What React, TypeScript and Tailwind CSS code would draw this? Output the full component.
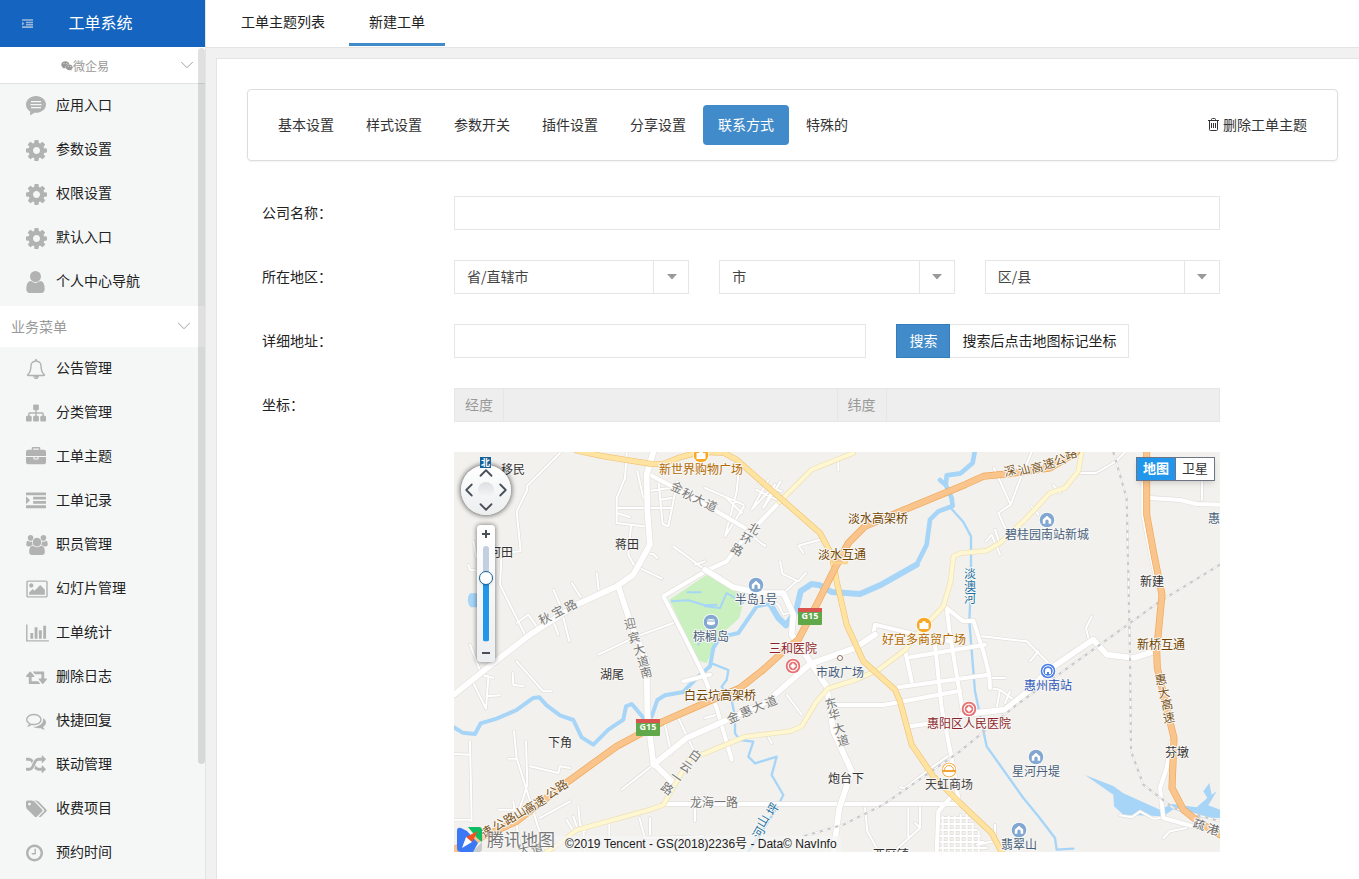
import React, { useState } from 'react';
import clsx from 'clsx';
import { ChevronDown, ChevronLeft, ChevronRight, ChevronUp } from 'lucide-react';
import { FaWeixin } from 'react-icons/fa';

interface Glyph {
  viewBox: string;
  width: number;
  height: number;
  d: string;
}

interface MenuItem {
  label: string;
  icon: Glyph;
}

const comment: Glyph = {
  viewBox: '0 0 20 20',
  width: 20,
  height: 20,
  d: 'M10 0C4.5 0 0 3.8 0 8.5c0 3 1.6 5.4 4.2 7L4 19.5l4.3-2.7c5.8.6 11.7-2.7 11.7-8.3C20 3.8 15.5 0 10 0zM5 5h10v1.3H5zm-.5 3h11v1.3h-11zM5 11h10v1.3H5z',
};
const cog: Glyph = {
  viewBox: '128 128 1536 1536',
  width: 21,
  height: 21,
  d: 'M1152 896q0-106-75-181t-181-75-181 75-75 181 75 181 181 75 181-75 75-181zm512-109v222q0 12-8 23t-20 13l-185 28q-19 54-39 91 35 50 107 138 10 12 10 25t-9 23q-27 37-99 108t-94 71q-12 0-26-9l-138-108q-44 23-91 38-16 136-29 186-7 28-36 28h-222q-14 0-24.5-8.5t-11.5-21.5l-28-184q-49-16-90-37l-141 107q-10 9-25 9-14 0-25-11-126-114-165-168-7-10-7-23 0-12 8-23 15-21 51-66.5t54-70.5q-27-50-41-99l-183-27q-13-2-21-12.5t-8-23.5v-222q0-12 8-23t19-13l186-28q14-46 39-92-40-57-107-138-10-12-10-24 0-10 9-23 26-36 98.5-107.5t94.5-71.5q13 0 26 10l138 107q44-23 91-38 16-136 29-186 7-28 36-28h222q14 0 24.5 8.5t11.5 21.5l28 184q49 16 90 37l142-107q9-9 24-9 13 0 25 10 129 119 165 170 7 8 7 22 0 12-8 23-15 21-51 66.5t-54 70.5q26 50 41 98l183 28q13 2 21 12.5t8 23.5z',
};
const user: Glyph = {
  viewBox: '256 128 1280 1536',
  width: 19,
  height: 22,
  d: 'M1536 1399q0 109-62.5 187t-150.5 78h-854q-88 0-150.5-78t-62.5-187q0-85 8.5-160.5t31.5-152 58.5-131 94-89 134.5-34.5q131 128 313 128t313-128q76 0 134.5 34.5t94 89 58.5 131 31.5 152 8.5 160.5zm-256-887q0 159-112.5 271.5t-271.5 112.5-271.5-112.5-112.5-271.5 112.5-271.5 271.5-112.5 271.5 112.5 112.5 271.5z',
};
const bell: Glyph = {
  viewBox: '0 0 1792 1792',
  width: 20,
  height: 20,
  d: 'M912 1696q0-16-16-16-59 0-101.5-42.5t-42.5-101.5q0-16-16-16t-16 16q0 73 51.5 124.5t124.5 51.5q16 0 16-16zm-666-288h1300q-266-300-266-832 0-51-24-105t-69-103-121.5-80.5-169.5-31.5-169.5 31.5-121.5 80.5-69 103-24 105q0 532-266 832zm1482 0q0 52-38 90t-90 38h-448q0 106-75 181t-181 75-181-75-75-181h-448q-52 0-90-38t-38-90q50-42 91-88t85-119.5 74.5-158.5 50-206 19.5-260q0-152 117-282.5t307-158.5q-8-19-8-39 0-40 28-68t68-28 68 28 28 68q0 20-8 39 190 28 307 158.5t117 282.5q0 139 19.5 260t50 206 74.5 158.5 85 119.5 91 88z',
};
const sitemap: Glyph = {
  viewBox: '0 0 1792 1792',
  width: 20,
  height: 20,
  d: 'M1792 1248v320q0 40-28 68t-68 28h-320q-40 0-68-28t-28-68v-320q0-40 28-68t68-28h96v-192h-512v192h96q40 0 68 28t28 68v320q0 40-28 68t-68 28h-320q-40 0-68-28t-28-68v-320q0-40 28-68t68-28h96v-192h-512v192h96q40 0 68 28t28 68v320q0 40-28 68t-68 28h-320q-40 0-68-28t-28-68v-320q0-40 28-68t68-28h96v-192q0-52 38-90t90-38h512v-192h-96q-40 0-68-28t-28-68v-320q0-40 28-68t68-28h320q40 0 68 28t28 68v320q0 40-28 68t-68 28h-96v192h512q52 0 90 38t38 90v192h96q40 0 68 28t28 68z',
};
const briefcase: Glyph = {
  viewBox: '0 0 1792 1792',
  width: 20,
  height: 20,
  d: 'M640 256h512v-128h-512v128zm1152 640v480q0 66-47 113t-113 47h-1472q-66 0-113-47t-47-113v-480h672v160q0 26 19 45t45 19h320q26 0 45-19t19-45v-160h672zm-768 0v128h-256v-128h256zm768-480v384h-1792v-384q0-66 47-113t113-47h352v-160q0-40 28-68t68-28h576q40 0 68 28t28 68v160h352q66 0 113 47t47 113z',
};
const indent: Glyph = {
  viewBox: '0 0 1792 1792',
  width: 20,
  height: 20,
  d: 'M352 832q0 14-9 23l-288 288q-9 9-23 9-13 0-22.5-9.5t-9.5-22.5v-576q0-13 9.5-22.5t22.5-9.5q14 0 23 9l288 288q9 9 9 23zm1440 480v192q0 13-9.5 22.5t-22.5 9.5h-1728q-13 0-22.5-9.5t-9.5-22.5v-192q0-13 9.5-22.5t22.5-9.5h1728q13 0 22.5 9.5t9.5 22.5zm0-384v192q0 13-9.5 22.5t-22.5 9.5h-1088q-13 0-22.5-9.5t-9.5-22.5v-192q0-13 9.5-22.5t22.5-9.5h1088q13 0 22.5 9.5t9.5 22.5zm0-384v192q0 13-9.5 22.5t-22.5 9.5h-1088q-13 0-22.5-9.5t-9.5-22.5v-192q0-13 9.5-22.5t22.5-9.5h1088q13 0 22.5 9.5t9.5 22.5zm0-384v192q0 13-9.5 22.5t-22.5 9.5h-1728q-13 0-22.5-9.5t-9.5-22.5v-192q0-13 9.5-22.5t22.5-9.5h1728q13 0 22.5 9.5t9.5 22.5z',
};
const users: Glyph = {
  viewBox: '64 0 1920 1792',
  width: 22,
  height: 20,
  d: 'M657 896q-162 5-265 128h-134q-82 0-138-40.5t-56-118.5q0-353 124-353 6 0 43.5 21t97.5 42.5 119 21.5q67 0 133-23-5 37-5 66 0 139 81 256zm1071 637q0 120-73 189.5t-194 69.5h-874q-121 0-194-69.5t-73-189.5q0-53 3.5-103.5t14-109 26.5-108.5 43-97.5 62-81 85.5-53.5 111.5-20q10 0 43 21.5t73 48 107 48 135 21.5 135-21.5 107-48 73-48 43-21.5q61 0 111.5 20t85.5 53.5 62 81 43 97.5 26.5 108.5 14 109 3.5 103.5zm-1024-1277q0 106-75 181t-181 75-181-75-75-181 75-181 181-75 181 75 75 181zm704 384q0 159-112.5 271.5t-271.5 112.5-271.5-112.5-112.5-271.5 112.5-271.5 271.5-112.5 271.5 112.5 112.5 271.5zm576 225q0 78-56 118.5t-138 40.5h-134q-103-123-265-128 81-117 81-256 0-29-5-66 66 23 133 23 59 0 119-21.5t97.5-42.5 43.5-21q124 0 124 353zm-128-609q0 106-75 181t-181 75-181-75-75-181 75-181 181-75 181 75 75 181z',
};
const image: Glyph = {
  viewBox: '-64 0 1920 1792',
  width: 22,
  height: 20,
  d: 'M576 576q0 80-56 136t-136 56-136-56-56-136 56-136 136-56 136 56 56 136zm1024 384v448h-1408v-192l320-320 160 160 512-512zm96-704h-1600q-13 0-22.5 9.5t-9.5 22.5v1216q0 13 9.5 22.5t22.5 9.5h1600q13 0 22.5-9.5t9.5-22.5v-1216q0-13-9.5-22.5t-22.5-9.5zm160 32v1216q0 66-47 113t-113 47h-1600q-66 0-113-47t-47-113v-1216q0-66 47-113t113-47h1600q66 0 113 47t47 113z',
};
const barChart: Glyph = {
  viewBox: '0 0 2048 1792',
  width: 23,
  height: 20,
  d: 'M640 896v512h-256v-512h256zm384-512v1024h-256v-1024h256zm1024 1152v128h-2048v-1536h128v1408h1920zm-640-896v768h-256v-768h256zm384-384v1152h-256v-1152h256z',
};
const retweet: Glyph = {
  viewBox: '0 0 1920 1792',
  width: 21,
  height: 20,
  d: 'M1280 1504q0 13-9.5 22.5t-22.5 9.5h-960q-8 0-13.5-2t-9-7-5.5-8-3-11.5-1-11.5v-600h-192q-26 0-45-19t-19-45q0-24 15-41l320-384q19-22 49-22t49 22l320 384q15 17 15 41 0 26-19 45t-45 19h-192v384h576q16 0 25 11l160 192q7 10 7 21zm640-416q0 24-15 41l-320 384q-20 23-49 23t-49-23l-320-384q-15-17-15-41 0-26 19-45t45-19h192v-384h-576q-16 0-25-12l-160-192q-7-9-7-20 0-13 9.5-22.5t22.5-9.5h960q8 0 13.5 2t9 7 5.5 8 3 11.5 1 11.5v600h192q26 0 45 19t19 45z',
};
const comments: Glyph = {
  viewBox: '0 0 1792 1792',
  width: 20,
  height: 20,
  d: 'M704 384q-153 0-286 52t-211.5 141-78.5 191q0 82 53 158t149 132l97 56-35 84q34-20 62-39l44-31 53 10q78 14 153 14 153 0 286-52t211.5-141 78.5-191-78.5-191-211.5-141-286-52zm0-128q191 0 353.5 68.5t256.5 186.5 94 257-94 257-256.5 186.5-353.5 68.5q-86 0-176-16-124 88-278 128-36 9-86 16h-3q-11 0-20.5-8t-11.5-21q-1-3-1-6.5t.5-6.5 2-6l2.5-5 3.5-5.5 4-5 4.5-5 4-4.5q5-6 23-25t26-29.5 22.5-29 25-38.5 20.5-44q-124-72-195-177t-71-224q0-139 94-257t256.5-186.5 353.5-68.5zm822 1169q10 24 20.5 44t25 38.5 22.5 29 26 29.5 23 25q1 1 4 4.5t4.5 5 4 5 3.5 5.5l2.5 5 2 6 .5 6.5-1 6.5q-3 14-13 22t-22 7q-50-7-86-16-154-40-278-128-90 16-176 16-271 0-472-132 58 4 88 4 161 0 309-45t264-129q125-92 192-212t67-254q0-77-23-152 129 71 204 178t75 230q0 120-71 224.5t-195 176.5z',
};
const random: Glyph = {
  viewBox: '0 0 1792 1792',
  width: 20,
  height: 20,
  d: 'M666 481q-60 92-137 273-22-45-37-72.5t-40.5-63.5-51-56.5-63-35-81.5-14.5h-224q-14 0-23-9t-9-23v-192q0-14 9-23t23-9h224q250 0 410 225zm1126 799q0 14-9 23l-320 320q-9 9-23 9-13 0-22.5-9.5t-9.5-22.5v-192q-32 0-85 .5t-81 1-73-1-71-5-64-10.5-63-18.5-58-28.5-59-40-55-53.5-56-69.5q59-93 136-273 22 45 37 72.5t40.5 63.5 51 56.5 63 35 81.5 14.5h256v-192q0-14 9-23t23-9q12 0 24 10l319 319q9 9 9 23zm0-896q0 14-9 23l-320 320q-9 9-23 9-13 0-22.5-9.5t-9.5-22.5v-192h-256q-48 0-87 15t-69 45-51 61.5-45 77.5q-32 62-78 171-29 66-49.5 111t-54 105-64 100-74 83-90 68.5-106.5 42-128 16.5h-224q-14 0-23-9t-9-23v-192q0-14 9-23t23-9h224q48 0 87-15t69-45 51-61.5 45-77.5q32-62 78-171 29-66 49.5-111t54-105 64-100 74-83 90-68.5 106.5-42 128-16.5h256v-192q0-14 9-23t23-9q12 0 24 10l319 319q9 9 9 23z',
};
const tags: Glyph = {
  viewBox: '0 0 1920 1792',
  width: 21,
  height: 20,
  d: 'M448 448q0-53-37.5-90.5t-90.5-37.5-90.5 37.5-37.5 90.5 37.5 90.5 90.5 37.5 90.5-37.5 37.5-90.5zm1067 576q0 53-37 90l-491 492q-39 37-91 37-53 0-90-37l-715-716q-38-37-64.5-101t-26.5-117v-416q0-52 38-90t90-38h416q53 0 117 26.5t102 64.5l715 714q37 39 37 91zm384 0q0 53-37 90l-491 492q-39 37-91 37-36 0-59-14t-53-45l470-470q37-37 37-90 0-52-37-91l-715-714q-38-38-102-64.5t-117-26.5h224q53 0 117 26.5t102 64.5l715 714q37 39 37 91z',
};
const clock: Glyph = {
  viewBox: '128 0 1536 1792',
  width: 17,
  height: 20,
  d: 'M1024 544v448q0 14-9 23t-23 9h-320q-14 0-23-9t-9-23v-64q0-14 9-23t23-9h224v-352q0-14 9-23t23-9h64q14 0 23 9t9 23zm416 352q0-148-73-273t-198-198-273-73-273 73-198 198-73 273 73 273 198 198 273 73 273-73 198-198 73-273zm224 0q0 209-103 385.5t-279.5 279.5-385.5 103-385.5-103-279.5-279.5-103-385.5 103-385.5 279.5-279.5 385.5-103 385.5 103 279.5 279.5 103 385.5z',
};

const coreMenu: MenuItem[] = [
  { label: '应用入口', icon: comment },
  { label: '参数设置', icon: cog },
  { label: '权限设置', icon: cog },
  { label: '默认入口', icon: cog },
  { label: '个人中心导航', icon: user },
];

const businessMenu: MenuItem[] = [
  { label: '公告管理', icon: bell },
  { label: '分类管理', icon: sitemap },
  { label: '工单主题', icon: briefcase },
  { label: '工单记录', icon: indent },
  { label: '职员管理', icon: users },
  { label: '幻灯片管理', icon: image },
  { label: '工单统计', icon: barChart },
  { label: '删除日志', icon: retweet },
  { label: '快捷回复', icon: comments },
  { label: '联动管理', icon: random },
  { label: '收费项目', icon: tags },
  { label: '预约时间', icon: clock },
];

const tabs = ['基本设置', '样式设置', '参数开关', '插件设置', '分享设置', '联系方式', '特殊的'];

const GlyphIcon: React.FC<{ glyph: Glyph }> = ({ glyph }) => (
  <svg viewBox={glyph.viewBox} width={glyph.width} height={glyph.height} fill="currentColor" fillRule="evenodd" aria-hidden="true">
    <path d={glyph.d} />
  </svg>
);

const MenuList: React.FC<{ items: MenuItem[] }> = ({ items }) => (
  <ul>
    {items.map((item) => (
      <li key={item.label}>
        <a href="#" className="flex h-11 items-center pb-1 pl-[26px] text-sm text-[#222]">
          <span className="mr-1.5 flex min-w-6 shrink-0 pt-1 text-[#b2b2b2]">
            <GlyphIcon glyph={item.icon} />
          </span>
          {item.label}
        </a>
      </li>
    ))}
  </ul>
);

const Sidebar: React.FC = () => (
  <aside className="flex w-[206px] shrink-0 flex-col border-r border-[#e4e4e4] bg-[#f5f7f7]">
    <div className="relative flex h-[47px] items-center justify-center bg-[#1565c0]">
      <button aria-label="收起菜单" className="absolute left-[22px] text-[#9cb6d8]">
        <svg viewBox="0 0 1792 1792" width="11" height="12" fill="currentColor">
          <path d={indent.d} />
        </svg>
      </button>
      <h1 className="pr-1 pb-1 text-base text-white">工单系统</h1>
    </div>
    <div className="relative flex-1">
      <button className="flex h-[37px] w-full items-center border-b border-[#e0e3e3] bg-white text-xs text-[#999]">
        <span className="flex flex-1 items-center justify-center pt-0.5 pr-[30px]">
          <FaWeixin className="h-3 w-3" />
          微企易
        </span>
        <ChevronDown className="mr-[7px] -ml-6 h-[22px] w-[22px]" strokeWidth={1} />
      </button>
      <div className="pb-0.5">
        <MenuList items={coreMenu} />
      </div>
      <button className="flex h-[41px] w-full items-center justify-between bg-white pr-2.5 pb-0.5 pl-[11px] text-sm text-[#999]">
        业务菜单
        <ChevronDown className="h-[22px] w-[22px]" strokeWidth={1} />
      </button>
      <MenuList items={businessMenu} />
      <div className="absolute top-px right-0 h-[86%] w-[7px] rounded bg-black/12" />
    </div>
  </aside>
);

interface RegionSelectProps {
  id: string;
  label: string;
}

const RegionSelect: React.FC<RegionSelectProps> = ({ id, label }) => (
  <div className="relative">
    <select
      id={id}
      aria-label={label}
      className="block h-[34px] w-full appearance-none border border-[#e5e6e9] bg-white px-3 pb-0.5 text-sm text-[#444] outline-none"
    >
      <option>{label}</option>
    </select>
    <span className="pointer-events-none absolute inset-y-0 right-0 flex w-9 items-center justify-center border-l border-[#e5e6e9]">
      <svg width="10" height="6" viewBox="0 0 10 6">
        <path d="M0 0h10L5 5.5z" fill="#999" />
      </svg>
    </span>
  </div>
);

const FormRow: React.FC<{ label: string; htmlFor: string; children: React.ReactNode }> = ({ label, htmlFor, children }) => (
  <div className="flex items-center">
    <label htmlFor={htmlFor} className="w-48 shrink-0 pb-0.5 text-sm text-[#222]">
      {label}
    </label>
    <div className="min-w-0 flex-1">{children}</div>
  </div>
);

// Map geometry is kept in thirds of a pixel
const rivers = [
  { w: 12, d: 'M12 838L38 854L75 858L92 826L140 812L200 786L250 750L268 748L290 772L330 802L370 816L395 868L430 890L475 845L520 815L528 775L545 768L560 785L585 815L605 806L622 756L645 742L700 732L740 690L780 655L790 600L810 568L865 555L920 475L960 467' },
  { w: 18, d: 'M960 467L985 510L1008 532L1038 490L1052 430L1085 408L1110 412L1145 432L1230 438L1290 412L1400 350' },
  { w: 14, d: 'M1400 350L1430 290L1440 215L1465 190L1508 174L1505 150L1488 112L1470 96M1488 105L1490 82L1532 76L1568 45L1574 12' },
  { w: 7, d: 'M1505 183L1540 222L1563 265L1563 400L1558 520L1575 730L1610 895L1720 1050L1765 1105L1815 1170L1820 1205L1870 1202' },
  { w: 7, d: 'M785 646L835 666L830 696L815 716L845 756L855 806L855 856L870 876L910 881L895 926L915 946L980 926L965 981L1000 1041L980 1080L930 1160L895 1212' },
];

const minorRoads = [
  'M330 15L230 115L232 125L200 190L212 310L155 315L150 410L225 560M500 180L662 180M500 225L590 236M500 225V150L525 90L530 15M562 70L580 150',
  'M590 130L660 120M625 95L638 228L655 235L682 100M630 155L665 150M500 195L540 207M585 315L610 318L622 330M543 235L535 320L552 352L636 392',
  'M670 295L758 360M735 350L765 340M440 375L446 425M365 405L392 447M310 425L330 470L358 580M310 520L325 560M445 620L560 565L670 525M70 280L80 330M55 350L60 365L130 375M200 525L235 500L260 535',
  'M60 590L95 680L130 690M65 695L108 782L115 690M110 745L150 742M188 675L190 710L220 715M200 640L280 730L305 730M12 918L60 920M60 880L65 1120M12 1115H65M192 850L200 930L262 1130L290 1210M228 880L232 1010L200 1110M175 932H200',
  'M240 955L325 975L330 955L360 960M145 1085L215 1085M190 1060L210 1200M270 1110L360 1060M385 1075L390 1130L405 1150M350 1115L370 1150M370 1105L380 1135M400 1150L405 1212M478 1125V1200M568 1110L585 1170L760 1165M600 1110V1160M735 1075V1120M515 1025L610 950',
  'M645 830L665 920M685 810L735 915M765 120L880 170M865 80L860 130L825 265L882 175M830 150L875 195M955 95L905 185L975 110L940 180L992 100M925 105L995 130M918 125L980 155M1110 275L1045 293L1060 315M990 340L998 378L1045 400L1068 375M1165 40V68',
  'M1000 435L1040 400M930 440L985 470L1000 500L1030 490M945 290L945 295L890 250M1010 740L1055 800M955 868L965 885M765 810L800 800',
  'M1632 60L1682 170L1645 195L1665 240M1682 170L1712 90L1745 12M1608 280L1625 260L1650 320M1635 245L1650 290M1745 175L1765 200M1810 112L1830 135M1880 75L1938 75L1998 40L2025 12M1595 565L1730 580L1795 645M1740 640L1765 610M1925 505L1908 540L1915 570M2256 100V155',
  'M1618 690L1665 690M1618 720L1650 725L1700 762M1650 725L1640 780M1680 730L1665 765M2010 1102L2045 1108L2070 1090L2110 1112L2150 1108M2140 1170L2160 1150L2210 1140M1350 1018L1365 1020L1450 955L1500 920M2112 600L2180 600',
  'M1245 1080L1252 1150L1285 1210M1330 1212L1410 1140L1395 1125M1410 1075V1140M1375 1080V1170',
  'M1465 1110H1560M1465 1128H1570M1465 1146H1580M1460 1164H1590M1460 1182H1600M1460 1200H1610M1478 1105V1212M1496 1105V1212M1514 1105V1212M1532 1100V1212M1550 1100V1212M1568 1130V1212M1586 1150V1212M1635 1130V1165M1580 1190L1630 1180',
];

const mediumRoads = [
  'M590 75L660 112L775 175L885 240M765 370L830 340L880 275L985 165',
  'M640 445L700 560L760 680L800 780L845 935M640 445L775 365M700 700L780 680',
  'M1155 771H1300L1345 763L1530 728M640 1068H1530M1460 1212L1465 1090L1500 1050M1365 606L1385 700M1455 590L1475 780L1505 930L1528 1070',
  'M1490 480L1500 560L1540 800M1380 628L1605 590M1345 718L1615 680M1380 835L1470 822M1270 560L1275 530L1400 560L1500 580M1490 480L1540 520L1570 518L1600 610L1618 680L1620 720',
  'M2100 150L2190 156L2240 168L2310 170M2080 70V200L2105 330L2125 420M2164 880L2150 960L2130 1020L2140 1110L2230 1135',
];

const majorRoads = [
  'M12 740L130 645L240 560L380 470L500 415L550 380L600 290L592 190L590 80L610 12',
  'M505 415L540 520L590 640L592 800L610 945L665 1000',
  'M765 365L850 418L930 435L1000 435L1030 500L1025 560L1080 640L1130 716L1150 850L1205 970L1168 1080L1150 1212',
  'M610 950L710 870L800 830L950 762L1020 700L1080 648L1215 600L1275 560',
  'M1535 800L1665 785L1740 725L1790 670L1870 615L1930 575L1970 620L2050 630L2120 608',
];

const paleRoads = [
  'M1210 15L1085 65L1000 150L988 162',
  'M1895 12L1885 70L1845 120L1800 135L1725 215L1650 285L1610 308L1530 316L1510 325L1502 400L1480 475L1400 560L1365 606L1285 666L1215 696L1135 721L1100 760L1055 835L1020 850L885 866L765 916L720 931L680 1000L640 1071L600 1085L380 1146L330 1185L290 1212',
];
const yellowRoads = [
  'M380 8L460 25L600 47L640 48L690 28L750 12L820 14L860 35L1110 255L1145 320L1160 400L1190 530L1240 640L1335 725L1350 760L1385 890L1450 985L1530 1065L1625 1155L1655 1212',
];
const highways = [
  'M12 1205L100 1165L200 1120L355 1000L500 895L640 820L765 765L870 720L940 665L1000 610L1045 575L1100 470L1150 370L1195 285L1245 235L1340 195L1545 110L1600 85L1670 78L1800 60L1880 12',
  'M2090 8V200L2112 320L2136 440L2120 606L2122 660L2150 780L2172 870L2166 1020L2200 1085L2250 1125L2310 1160',
];
const railways = [
  'M1990 12L2030 150L2040 620L2043 910L2080 1010L2170 1080L2310 1120',
  'M2310 350L2130 460L1950 590L1700 770L1530 910L1300 1070L1180 1130L1060 1165',
];

const RoadSet: React.FC<{ paths: string[]; casing: string; fill: string; width: number }> = ({ paths, casing, fill, width }) => (
  <>
    {paths.map((d) => (
      <path key={`c${d}`} d={d} stroke={casing} strokeWidth={width + 4} />
    ))}
    {paths.map((d) => (
      <path key={d} d={d} stroke={fill} strokeWidth={width} />
    ))}
  </>
);

interface PlaceLabel {
  text: string;
  x: number;
  y: number;
  color: string;
}

const PLACE = '#333';
const ESTATE = '#475f7b';
const SHOP = '#b26a00';
const JUNCTION = '#704400';
const HOSPITAL = '#8c1f2b';

const placeLabels: PlaceLabel[] = [
  { text: '移民', x: 59, y: 22, color: PLACE },
  { text: '河田', x: 47, y: 105, color: PLACE },
  { text: '蒋田', x: 173, y: 97, color: PLACE },
  { text: '湖尾', x: 158, y: 227, color: PLACE },
  { text: '下角', x: 106, y: 295, color: PLACE },
  { text: '炮台下', x: 392, y: 331, color: PLACE },
  { text: '新建', x: 698, y: 134, color: PLACE },
  { text: '芬墩', x: 723, y: 305, color: PLACE },
  { text: '西区镇', x: 437, y: 407, color: PLACE },
  { text: '惠', x: 760, y: 71, color: ESTATE },
  { text: '新世界购物广场', x: 247, y: 22, color: SHOP },
  { text: '好宜多商贸广场', x: 470, y: 192, color: SHOP },
  { text: '淡水高架桥', x: 424, y: 71, color: JUNCTION },
  { text: '淡水互通', x: 388, y: 107, color: JUNCTION },
  { text: '白云坑高架桥', x: 266, y: 248, color: JUNCTION },
  { text: '新桥互通', x: 707, y: 197, color: JUNCTION },
  { text: '半岛1号', x: 302, y: 152, color: ESTATE },
  { text: '棕榈岛', x: 257, y: 189, color: ESTATE },
  { text: '碧桂园南站新城', x: 593, y: 87, color: ESTATE },
  { text: '市政广场', x: 386, y: 225, color: ESTATE },
  { text: '星河丹堤', x: 582, y: 324, color: ESTATE },
  { text: '翡翠山', x: 565, y: 397, color: ESTATE },
  { text: '天虹商场', x: 495, y: 337, color: '#444' },
  { text: '惠州南站', x: 594, y: 238, color: '#2c55b8' },
  { text: '三和医院', x: 339, y: 201, color: HOSPITAL },
  { text: '惠阳区人民医院', x: 515, y: 276, color: HOSPITAL },
  { text: '龙海一路', x: 260, y: 355, color: '#777' },
];

interface StreetLabel {
  chars: string;
  points: [number, number][];
  angle: number;
  color: string;
}

const streetLabels: StreetLabel[] = [
  { chars: '秋宝路', points: [[91, 167], [104, 160], [117, 154]], angle: -28, color: '#777' },
  { chars: '金秋大道', points: [[223, 36], [234, 43], [245, 48], [257, 54]], angle: 25, color: '#777' },
  { chars: '北环路', points: [[300, 77], [292, 87], [283, 98]], angle: 30, color: '#777' },
  { chars: '迎宾大道南', points: [[176, 172], [180, 186], [185, 198], [189, 210], [192, 221]], angle: -14, color: '#777' },
  { chars: '金惠大道', points: [[279, 266], [292, 260], [304, 255], [317, 250]], angle: -24, color: '#777' },
  { chars: '东华大道', points: [[377, 252], [380, 263], [385, 277], [389, 289]], angle: -14, color: '#777' },
  { chars: '白云一路', points: [[241, 304], [232, 315], [222, 326], [213, 337]], angle: 35, color: '#777' },
  { chars: '深汕高速公路', points: [[556, 19], [570, 18], [583, 16], [595, 12], [606, 8], [617, 2]], angle: -15, color: '#7a5420' },
  { chars: '惠大高速', points: [[707, 228], [710, 241], [713, 253], [715, 266]], angle: -10, color: '#7a5420' },
  { chars: '疏港', points: [[745, 373], [759, 378]], angle: 15, color: '#666' },
  { chars: '速公路山高速公路', points: [[33, 380], [45, 373], [56, 367], [66, 361], [76, 356], [86, 350], [98, 341], [108, 334]], angle: -32, color: '#7a5420' },
  { chars: '淡澳河', points: [[516, 122], [516, 135], [516, 147]], angle: 0, color: '#1f73a0' },
  { chars: '坪山河', points: [[319, 357], [309, 369], [305, 381]], angle: -60, color: '#1f73a0' },
  { chars: '大道', points: [[70, 398], [83, 397]], angle: -12, color: '#777' },
];

const Marker: React.FC<{ x: number; y: number; color: string; children: React.ReactNode }> = ({ x, y, color, children }) => (
  <g transform={`translate(${x} ${y})`}>
    <circle r="8" fill="#fff" />
    <circle r="7.3" fill={color} />
    {children}
  </g>
);

const home = <path d="M0-4.2L4.2-.4V3.8H1.6V1A1.6 1.6 0 0 0-1.6 1V3.8H-4.2V-.4z" fill="#fff" />;
const bag = <path d="M-4.5-2H-2A2 2 0 0 1 2-2H4.5V4H-4.5z" fill="#fff" />;
const clinic = (
  <>
    <circle r="4.8" fill="none" stroke="#fff" strokeWidth="1.2" />
    <path d="M0-3L3 0L0 3L-3 0z" fill="#fff" />
  </>
);

const Shield: React.FC<{ x: number; y: number }> = ({ x, y }) => (
  <g transform={`translate(${x} ${y})`}>
    <rect x="-12" y="-8" width="24" height="17" rx="1" fill="#60a84a" />
    <rect x="-12" y="-8" width="24" height="4" fill="#d9534f" />
    <text y="3" textAnchor="middle" fontSize="9" fontWeight="700" fill="#fff" className="font-['Open_Sans','Liberation_Sans',sans-serif]">
      G15
    </text>
  </g>
);

const MapDrawing: React.FC = () => (
  <svg className="block h-[400px] w-full bg-[#f2f1ee]" role="img" aria-label="地图">
    <g transform="translate(-4 -4) scale(0.33333)" fill="none" strokeLinecap="round" strokeLinejoin="round">
      <path d="M658 455L775 377L840 405L885 440L868 510L810 562L788 606L770 645L745 638z" fill="#c9f0be" />
      <g stroke="#a7d5f8">
        {rivers.map((river) => (
          <path key={river.d} d={river.d} strokeWidth={river.w} />
        ))}
        <path d="M665 460L715 457L765 472L800 470M712 433H752M765 475L810 480L830 435L880 465M745 590L760 550" strokeWidth="6" />
      </g>
      <path d="M1905 981L1990 1014L2020 1036L2130 1085L2165 1068L2240 1078L2272 1050L2260 1030L2278 1005L2285 1040L2300 1030L2275 1072L2310 1085V1110L2240 1108L2170 1084L2140 1105L2020 1100L1992 1075L1990 1040z" fill="#a7d5f8" />
      <path d="M60 436H84V478H62Q50 465 55 445z" fill="#a7d5f8" />
      <RoadSet paths={minorRoads} casing="#e0deda" fill="#fff" width={6} />
      <RoadSet paths={mediumRoads} casing="#e3e1dd" fill="#fff" width={12} />
      <RoadSet paths={majorRoads} casing="#e3e1dd" fill="#fff" width={17} />
      {railways.map((d) => (
        <g key={d} strokeLinecap="butt">
          <path d={d} stroke="#dcdcdc" strokeWidth="6" />
          <path d={d} stroke="#fff" strokeWidth="3" />
          <path d={d} stroke="#c9c9c9" strokeWidth="6" strokeDasharray="9 15" />
        </g>
      ))}
      <RoadSet paths={paleRoads} casing="#ecdfb4" fill="#fff6d2" width={12} />
      <RoadSet paths={yellowRoads} casing="#f1c478" fill="#ffe3a0" width={14} />
      <RoadSet paths={highways} casing="#efa757" fill="#fac58c" width={17} />
      <path d="M1135 315L1195 315L1190 345L1150 345z" stroke="#fbd38d" strokeWidth="8" />
    </g>

    <Marker x={593} y={68} color="#82a7d0">{home}</Marker>
    <Marker x={302} y={133} color="#82a7d0">{home}</Marker>
    <Marker x={582} y={305} color="#82a7d0">{home}</Marker>
    <Marker x={565} y={378} color="#82a7d0">{home}</Marker>
    <Marker x={257} y={170} color="#82a7d0">
      <path d="M-4.5-2.5Q0-5 4.5-2.5V2.5Q0 5-4.5 2.5zM-4.5-1H4.5" fill="#fff" stroke="#82a7d0" />
    </Marker>
    <Marker x={247} y={3} color="#f9a825">{bag}</Marker>
    <Marker x={470} y={173} color="#f9a825">{bag}</Marker>
    <Marker x={339} y={214} color="#e57373">{clinic}</Marker>
    <Marker x={515} y={257} color="#e57373">{clinic}</Marker>
    <Marker x={594} y={219} color="#4d80e6">
      <circle r="5.2" fill="none" stroke="#fff" />
      <path d="M-3 3V0A3 3 0 0 1 3 0V3H1V1H-1V3z" fill="#fff" />
    </Marker>
    <Marker x={495} y={318} color="#f2a43a">
      <path d="M-6.4 0A6.4 6.4 0 0 1 6.4 0zM-6 2H6A6.3 6.3 0 0 1-6 2z" fill="#fff" />
      <path d="M-4.5 0A4.5 4.5 0 0 1 4.5 0" fill="none" stroke="#f2a43a" />
    </Marker>
    <circle cx="386" cy="206" r="2.5" fill="#fff" stroke="#8d6e63" />
    <Shield x={356} y={164} />
    <Shield x={194} y={275} />

    <g fontSize="12" textAnchor="middle" stroke="#f8f7f5" strokeWidth="2" strokeLinejoin="round" className="[paint-order:stroke]">
      {placeLabels.map((label) => (
        <text key={label.text} x={label.x} y={label.y} fill={label.color}>
          {label.text}
        </text>
      ))}
      {streetLabels.map((street) =>
        street.points.map(([x, y], i) => (
          <text key={`${street.chars}${i}`} transform={`translate(${x} ${y}) rotate(${street.angle})`} y="4" fill={street.color}>
            {street.chars[i]}
          </text>
        )),
      )}
    </g>
  </svg>
);

const PanControl: React.FC = () => (
  <div className="absolute top-[13px] left-[7px] grid h-[50px] w-[50px] grid-cols-3 grid-rows-3 place-items-center rounded-full bg-linear-to-b from-white to-[#eceeef] text-[#4a505a] shadow-[0_0_5px_1px_rgba(0,0,0,0.55)]">
    <button aria-label="向上平移" className="col-start-2 row-start-1">
      <ChevronUp className="h-[22px] w-[22px]" strokeWidth={2} />
    </button>
    <button aria-label="向左平移" className="col-start-1 row-start-2">
      <ChevronLeft className="h-[22px] w-[22px]" strokeWidth={2} />
    </button>
    <span className="col-start-2 row-start-2 h-4 w-4 rounded-full bg-linear-to-b from-[#dcdfe2] to-[#f7f7f7]" />
    <button aria-label="向右平移" className="col-start-3 row-start-2">
      <ChevronRight className="h-[22px] w-[22px]" strokeWidth={2} />
    </button>
    <button aria-label="向下平移" className="col-start-2 row-start-3">
      <ChevronDown className="h-[22px] w-[22px]" strokeWidth={2} />
    </button>
  </div>
);

const ZoomControl: React.FC = () => {
  const [zoom, setZoom] = useState(69);

  return (
    <div className="absolute top-[73px] left-[23px] flex h-[137px] w-[18px] flex-col items-center justify-between rounded bg-linear-to-b from-white to-[#eceeef] py-1 shadow-[0_0_4px_1px_rgba(0,0,0,0.4)]">
      <button aria-label="放大" onClick={() => setZoom(Math.min(100, zoom + 5))}>
        <svg width="10" height="10" viewBox="0 0 10 10" className="block">
          <path d="M1 5H9M5 1V9" stroke="#4a505a" strokeWidth="2" />
        </svg>
      </button>
      <span className="relative flex h-24 w-4 justify-center">
        <span className="h-full w-1.5 overflow-hidden rounded-full bg-[#c3cfe0]">
          <span className="block" style={{ height: `${100 - zoom}%` }} />
          <span className="block bg-[#2196ea]" style={{ height: `${zoom}%` }} />
        </span>
        <input
          type="range"
          aria-label="缩放级别"
          value={zoom}
          onChange={(e) => setZoom(Number(e.target.value))}
          className="absolute inset-0 m-0 h-24 w-4 appearance-none bg-transparent [direction:rtl] [writing-mode:vertical-lr] [&::-webkit-slider-thumb]:h-[14px] [&::-webkit-slider-thumb]:w-[14px] [&::-webkit-slider-thumb]:appearance-none [&::-webkit-slider-thumb]:rounded-full [&::-webkit-slider-thumb]:border [&::-webkit-slider-thumb]:border-[#15629b] [&::-webkit-slider-thumb]:bg-white [&::-webkit-slider-thumb]:shadow"
        />
      </span>
      <button aria-label="缩小" onClick={() => setZoom(Math.max(0, zoom - 5))}>
        <svg width="10" height="10" viewBox="0 0 10 10" className="block">
          <path d="M1 5H9" stroke="#4a505a" strokeWidth="2" />
        </svg>
      </button>
    </div>
  );
};

const MapPanel: React.FC = () => (
  <div className="relative overflow-hidden">
    <MapDrawing />
    <PanControl />
    <span className="absolute top-[5px] left-[26px] flex h-[11px] w-[11px] items-center justify-center bg-[#15629b] text-[9px] leading-none font-bold text-white">
      北
    </span>
    <ZoomControl />
    <div className="absolute top-[5px] right-[5px] flex h-6 border border-[#6d7482] text-[13px] leading-[20px] shadow-md">
      <button className="w-[39px] border-r border-[#6d7482] bg-[#2196ea] pb-0.5 font-bold text-white">地图</button>
      <button className="w-[38px] bg-white pb-0.5 text-[#333]">卫星</button>
    </div>
    <div className="absolute bottom-0 left-0 flex items-end">
      <div className="flex h-[26px] items-center gap-1 pl-[3px]">
        <svg width="26" height="25" viewBox="0 0 26 25" aria-hidden="true">
          <path d="M15 25L25 15V22Q25 25 22 25z" fill="#c8cbd0" />
          <path d="M0 4Q0 0 4 1L10 4L21 16L16 25H4Q0 25 0 21z" fill="#3b78f5" />
          <path d="M11 0H22Q25 0 25 3V15L20 11z" fill="#0ebd63" />
          <path d="M21 4L15 15L9 10z" fill="#f4511e" />
          <path d="M5 21L15 15L9 10z" fill="#fff" />
        </svg>
        <span className="text-[17px] leading-6 text-[#777] [text-shadow:0_0_2px_#fff,0_0_2px_#fff]">腾讯地图</span>
      </div>
      <p className="bg-[#f5f5f5]/70 pr-1 pl-2.5 font-['Liberation_Sans','Noto_Sans_CJK_SC',sans-serif] text-xs leading-4 whitespace-nowrap text-[#222]">
        ©2019 Tencent - GS(2018)2236号 - Data© NavInfo
      </p>
    </div>
  </div>
);

const ContactForm: React.FC = () => (
  <form className="mt-[35px] flex flex-col gap-[30px] pr-[118px] pl-[15px]" onSubmit={(e) => e.preventDefault()}>
    <FormRow label="公司名称：" htmlFor="company">
      <input id="company" type="text" className="block h-[34px] w-full border border-[#e5e6e9] px-3 text-sm" />
    </FormRow>
    <FormRow label="所在地区：" htmlFor="province">
      <div className="grid grid-cols-3 gap-[30px]">
        <RegionSelect id="province" label="省/直辖市" />
        <RegionSelect id="city" label="市" />
        <RegionSelect id="district" label="区/县" />
      </div>
    </FormRow>
    <FormRow label="详细地址：" htmlFor="address">
      <div className="flex">
        <input id="address" type="text" className="mr-[30px] h-[34px] w-7/13 border border-[#e5e6e9] px-3 text-sm" />
        <button className="h-[34px] border border-[#357ebd] bg-[#428bca] px-3 pb-0.5 text-sm text-white">搜索</button>
        <span className="flex h-[34px] items-center border border-l-0 border-[#e5e6e9] px-3 pb-0.5 text-sm whitespace-nowrap text-[#222]">
          搜索后点击地图标记坐标
        </span>
      </div>
    </FormRow>
    <FormRow label="坐标：" htmlFor="longitude">
      <div className="flex h-[34px] border border-[#e5e6e9] bg-[#eee] text-sm text-[#999]">
        <label htmlFor="longitude" className="flex items-center border-r border-[#e5e6e9] px-2.5 pb-0.5">
          经度
        </label>
        <input id="longitude" type="text" readOnly className="min-w-0 flex-1 px-3" />
        <label htmlFor="latitude" className="flex items-center border-x border-[#e5e6e9] px-2.5 pb-0.5">
          纬度
        </label>
        <input id="latitude" type="text" readOnly className="min-w-0 flex-1 px-3" />
      </div>
    </FormRow>
    <div className="pl-48">
      <MapPanel />
    </div>
  </form>
);

export default function App() {
  const [activeTab, setActiveTab] = useState('联系方式');

  return (
    <div className="flex min-h-screen bg-[#f1f1f1] font-['Noto_Sans_CJK_SC',sans-serif]">
      <Sidebar />
      <div className="flex min-w-0 flex-1 flex-col">
        {/* Top tabs */}
        <nav className="flex h-12 border-b border-[#e4e4e4] bg-white pl-[23px] text-sm text-[#222]">
          <a href="#" className="flex h-[46px] items-center px-3 pb-1">
            工单主题列表
          </a>
          <a href="#" className="ml-3 flex h-[46px] items-center border-b-3 border-[#428bca] px-5 pb-0.5">
            新建工单
          </a>
        </nav>

        <main className="mt-2.5 ml-2.5 flex-1 border-t border-l border-[#e4e4e4] bg-white pt-[30px] pr-[21px] pb-[26px] pl-[30px]">
          {/* Section tabs */}
          <div className="flex h-18 items-center justify-between rounded border border-[#ddd] px-[15px] text-sm text-[#333] shadow-xs">
            <div className="flex gap-0.5">
              {tabs.map((tab) => (
                <button
                  key={tab}
                  onClick={() => setActiveTab(tab)}
                  className={clsx('h-10 rounded px-[15px] pb-0.5', tab === activeTab && 'bg-[#428bca] text-white')}
                >
                  {tab}
                </button>
              ))}
            </div>
            <button className="flex h-10 items-center gap-1 px-[15px] pb-0.5">
              <svg width="11" height="13" viewBox="0 0 11 13" fill="none" stroke="currentColor" aria-hidden="true">
                <path d="M0 2.5H11M3.5 2.5V1.5Q3.5.5 4.5.5H6.5Q7.5.5 7.5 1.5V2.5M1.5 3V11.5Q1.5 12.5 2.5 12.5H8.5Q9.5 12.5 9.5 11.5V3M3.5 5V10M5.5 5V10M7.5 5V10" />
              </svg>
              删除工单主题
            </button>
          </div>

          <ContactForm />
        </main>
      </div>
    </div>
  );
}
